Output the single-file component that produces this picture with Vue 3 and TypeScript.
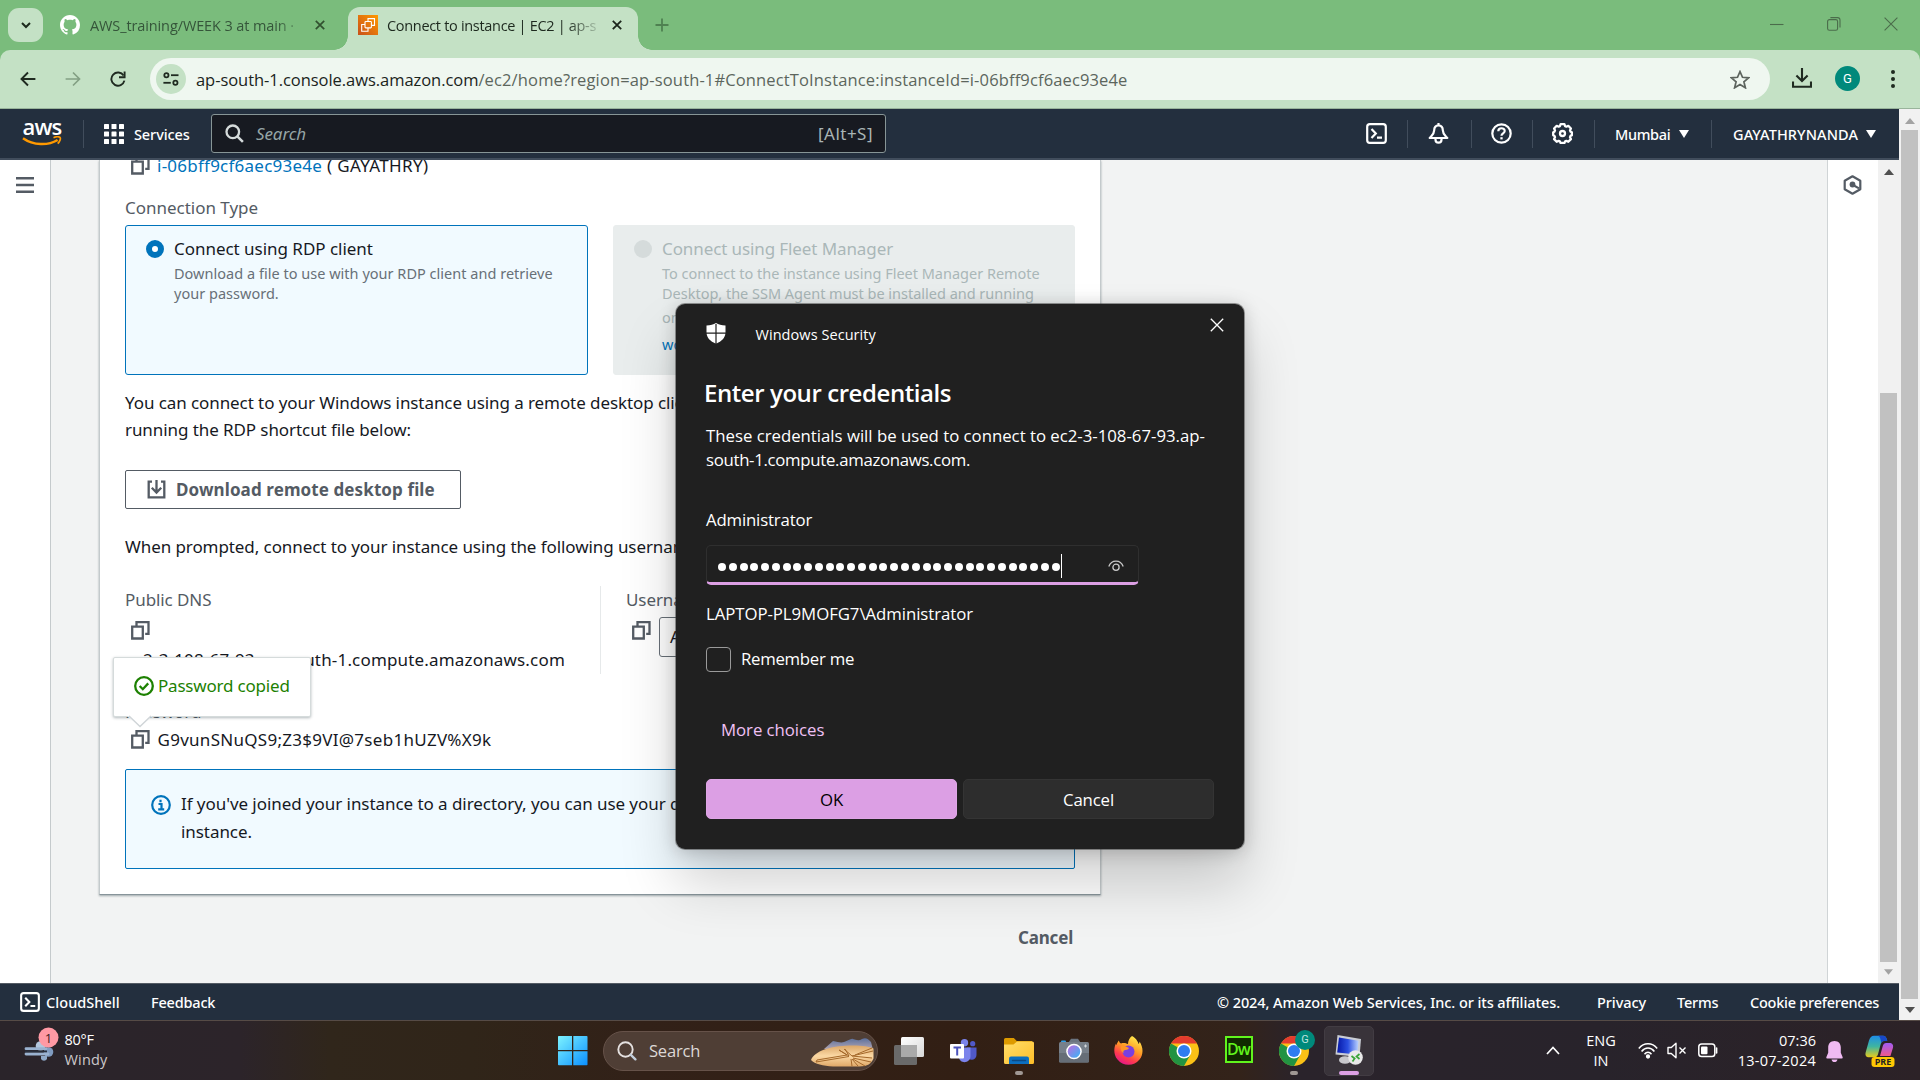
<script setup lang="ts">
import { ref } from 'vue'

const passwordLength = 32
const serverDomain = 'ec2-3-108-67-93.ap-south-1.compute.amazonaws.com'
const rememberMe = ref(false)
const password = 'G9vunSNuQS9;Z3$9VI@7seb1hUZV%X9k'
</script>

<template>
  <div class="screen">
    <!-- Browser tab strip -->
    <div class="tabstrip">
      <div class="tab-search">
        <svg width="12" height="12" viewBox="0 0 12 12"><path d="M2 4l4 4 4-4" fill="none" stroke="#1c2a1d" stroke-width="2" /></svg>
      </div>
      <div class="tab idle">
        <svg class="fav" width="20" height="20" viewBox="0 0 16 16"><path fill="#fff" d="M8 0C3.58 0 0 3.58 0 8c0 3.54 2.29 6.53 5.47 7.59.4.07.55-.17.55-.38 0-.19-.01-.82-.01-1.49-2.01.37-2.53-.49-2.69-.94-.09-.23-.48-.94-.82-1.13-.28-.15-.68-.52-.01-.53.63-.01 1.08.58 1.23.82.72 1.21 1.87.87 2.33.66.07-.52.28-.87.51-1.07-1.78-.2-3.64-.89-3.64-3.95 0-.87.31-1.59.82-2.15-.08-.2-.36-1.02.08-2.12 0 0 .67-.21 2.2.82.64-.18 1.32-.27 2-.27s1.36.09 2 .27c1.53-1.04 2.2-.82 2.2-.82.44 1.1.16 1.92.08 2.12.51.56.82 1.27.82 2.15 0 3.07-1.87 3.75-3.65 3.95.29.25.54.73.54 1.48 0 1.07-.01 1.93-.01 2.2 0 .21.15.46.55.38A8.01 8.01 0 0 0 16 8c0-4.42-3.58-8-8-8z" /></svg>
        <span class="tab-title">AWS_training/WEEK 3 at main ·</span>
        <svg class="tab-x" width="10" height="10" viewBox="0 0 10 10"><path d="M.8.8l8.4 8.4M9.2.8L.8 9.2" stroke="#31502f" stroke-width="1.7" /></svg>
      </div>
      <div class="tab active">
        <svg class="fav" width="20" height="20" viewBox="0 0 20 20">
          <defs><linearGradient id="ec2" x1="0" y1="1" x2="1" y2="0"><stop offset="0" stop-color="#c8511b" /><stop offset="1" stop-color="#f90" /></linearGradient></defs>
          <rect width="20" height="20" fill="url(#ec2)" />
          <g fill="none" stroke="#fff" stroke-width="1.1"><rect x="7" y="6.5" width="6.4" height="6.4" rx=".8" /><path d="M10 6.5V3.6h6.5v6.8h-3M7 9.5H3.7v6.8H10v-3.4" /></g>
        </svg>
        <span class="tab-title">Connect to instance | EC2 | ap-s</span>
        <svg class="tab-x" width="10" height="10" viewBox="0 0 10 10"><path d="M.8.8l8.4 8.4M9.2.8L.8 9.2" stroke="#1b251b" stroke-width="1.8" /></svg>
      </div>
      <svg class="plus" width="14" height="14" viewBox="0 0 14 14"><path d="M7 .5v13M.5 7h13" stroke="#4f8151" stroke-width="1.8" /></svg>
      <div class="win-ctl">
        <svg width="14" height="16" viewBox="0 0 14 16"><path d="M0 8.5h13.5" stroke="#4b6c4b" stroke-width="1.1" /></svg>
        <svg width="14" height="16" viewBox="0 0 14 16"><rect x=".6" y="3.6" width="10" height="10.6" rx="1.8" fill="none" stroke="#4b6c4b" stroke-width="1.1" /><path d="M3.4 1.6h7.2a2.4 2.4 0 0 1 2.4 2.4v7.6" fill="none" stroke="#4b6c4b" stroke-width="1.1" /></svg>
        <svg width="14" height="16" viewBox="0 0 14 16"><path d="M.6 1.6l12.8 12.8M13.4 1.6L.6 14.4" stroke="#4b6c4b" stroke-width="1.1" /></svg>
      </div>
    </div>

    <!-- Browser toolbar -->
    <div class="toolbar-wrap">
      <div class="toolbar">
        <svg class="nav-back" width="16" height="16" viewBox="0 0 16 16"><path d="M15.4 8H1.600M8 1.500L1.500 8 8 14.500" fill="none" stroke="#1f2a20" stroke-width="1.900" /></svg>
        <svg class="nav-fwd" width="16" height="16" viewBox="0 0 16 16"><path d="M.6 8h13.800M8 1.500L14.500 8 8 14.500" fill="none" stroke="#83a084" stroke-width="1.700" /></svg>
        <svg class="nav-reload" width="16" height="16" viewBox="0 0 16 16"><path d="M13.600 4.600A6.600 6.600 0 1 0 14.400 9.600" fill="none" stroke="#1f2a20" stroke-width="1.900" /><path d="M14.600.6v5.600H9" fill="none" stroke="#1f2a20" stroke-width="1.900" /></svg>
        <div class="omnibox">
          <div class="site-info">
            <svg width="16" height="14" viewBox="0 0 16 14" fill="none" stroke="#1f2a20" stroke-width="1.800"><circle cx="3.400" cy="3.200" r="2.100" /><path d="M8 3.200h7.500" /><circle cx="12.400" cy="10.800" r="2.100" /><path d="M.4 10.800h7.400" /></svg>
          </div>
          <span class="url"><b>ap-south-1.console.aws.amazon.com</b>/ec2/home?region=ap-south-1#ConnectToInstance:instanceId=i-06bff9cf6aec93e4e</span>
          <svg class="star" width="20" height="19" viewBox="0 0 20 19"><path d="M10 1.600l2.500 5.700 6.100.5-4.700 4 1.500 6L10 14.500l-5.400 3.300 1.500-6-4.700-4 6.100-.5z" fill="none" stroke="#5d645e" stroke-width="1.700" /></svg>
        </div>
        <svg class="dl" width="20" height="20" viewBox="0 0 20 20"><path d="M10 0v12.400M4.400 7.400L10 13l5.600-5.600M1 13.500v5.300h18v-5.300" fill="none" stroke="#1f2a20" stroke-width="2.100" /></svg>
        <div class="avatar">G</div>
        <svg class="kebab" width="4" height="18" viewBox="0 0 4 18"><g fill="#1f2a20"><circle cx="2" cy="2" r="2" /><circle cx="2" cy="9" r="2" /><circle cx="2" cy="16" r="2" /></g></svg>
      </div>
    </div>

    <!-- Web page -->
    <div class="page">
      <div class="console">
        <header class="aws-head">
          <div class="aws-logo">
            <span>aws</span>
            <svg width="40" height="12" viewBox="0 0 40 12"><path d="M1 2.200c10.500 7.400 25 7.600 34.600 1.800" fill="none" stroke="#f90" stroke-width="2.500" /><path d="M31.500 1.700c2.500-1 5.600-1 6.600-.2.800.9-.2 4-2.400 6.200" fill="none" stroke="#f90" stroke-width="1.700" /></svg>
          </div>
          <i class="sep"></i>
          <svg class="grid" width="20" height="20" viewBox="0 0 20 20" fill="#fff"><template v-for="r in 3" :key="r"><rect v-for="c in 3" :key="c" :x="(c - 1) * 7.500" :y="(r - 1) * 7.500" width="5" height="5" rx=".6" /></template></svg>
          <span class="services">Services</span>
          <div class="aws-search">
            <svg width="19" height="19" viewBox="0 0 19 19"><circle cx="7.800" cy="7.800" r="6.300" fill="none" stroke="#d5dbdb" stroke-width="2.300" /><path d="M12.300 12.300l5.600 5.600" stroke="#d5dbdb" stroke-width="2.500" /></svg>
            <em>Search</em>
            <span>[Alt+S]</span>
          </div>
          <div class="head-right">
            <div class="hr-cell w1"><svg width="21" height="21" viewBox="0 0 21 21" fill="none" stroke="#fff" stroke-width="2.200"><rect x="1.200" y="1.200" width="18.600" height="18.600" rx="2.600" /><path d="M5.500 6l4.300 4.500L5.500 15M11 14.700h5" /></svg></div>
            <div class="hr-cell w2"><svg width="21" height="21" viewBox="0 0 21 21" fill="none" stroke="#fff" stroke-width="2.200"><path d="M10.500 2.500c-3.300 0-4.300 2.400-4.300 4.700 0 3.800-2.400 5.400-4.500 7.800h17.600c-2.100-2.400-4.500-4-4.500-7.800 0-2.300-1-4.700-4.300-4.700z" stroke-linejoin="round" /><path d="M7.500 15.500v1.200a3 3 0 0 0 6 0v-1.200M10.500 0v2" /></svg></div>
            <div class="hr-cell w3"><svg width="21" height="21" viewBox="0 0 21 21" fill="none" stroke="#fff" stroke-width="2.200"><circle cx="10.500" cy="10.500" r="9.200" /><path d="M7.300 8.300c0-4 6.400-4 6.400-.3 0 2.200-3.200 2.400-3.200 4.700" /><path d="M10.500 14.200v2.200" stroke-width="2.300" /></svg></div>
            <div class="hr-cell w4"><svg width="21" height="21" viewBox="0 0 21 21" fill="none" stroke="#fff" stroke-width="2.300"><path d="M8.600 1.200h3.800l.7 2 1.300.5 1.900-.9 2.600 2.700-.9 1.900.5 1.300 1.400.6v2.900l-1.400.7-.5 1.300.9 1.900-2.600 2.700-1.900-.9-1.300.5-.7 1.500H8.600l-.7-1.500-1.300-.5-1.900.9-2.600-2.700.9-1.900-.5-1.300-1.300-.7V9.300l1.300-.6.500-1.300-.9-1.900 2.600-2.700 1.900.9 1.300-.5z" stroke-linejoin="round" /><circle cx="10.500" cy="10.500" r="2.500" /></svg></div>
            <div class="hr-cell w5"><span class="mumbai">Mumbai</span><i class="caret"></i></div>
            <div class="hr-cell w6"><span class="account">GAYATHRYNANDA</span><i class="caret"></i></div>
          </div>
        </header>

        <div class="body">
          <aside class="left"><svg width="18" height="16" viewBox="0 0 18 16"><path d="M0 1.300h18M0 8h18M0 14.700h18" stroke="#545b64" stroke-width="2.400" /></svg></aside>

          <main class="main">
            <section class="card">
              <div class="row first">
                <svg class="copy" width="19" height="19" viewBox="0 0 19 19"><path d="M5.500 4.500V1.200h12v11.600h-3.300M1.200 5.700h10.600v11.800H1.200z" fill="none" stroke="#545b64" stroke-width="2.300" /></svg>
                <span class="link id">i-06bff9cf6aec93e4e</span><span class="name">( GAYATHRY)</span>
              </div>
              <div class="label conn">Connection Type</div>
              <div class="tiles">
                <div class="tile on">
                  <i class="radio"></i>
                  <div>
                    <h4>Connect using RDP client</h4>
                    <p>Download a file to use with your RDP client and retrieve<br>your password.</p>
                  </div>
                </div>
                <div class="tile off">
                  <i class="radio"></i>
                  <div>
                    <h4>Connect using Fleet Manager</h4>
                    <p>To connect to the instance using Fleet Manager Remote<br>Desktop, the SSM Agent must be installed and running</p>
                    <p class="gap">on the instance.</p>
                    <p class="gap2 link">working with SSM Agent</p>
                  </div>
                </div>
              </div>
              <p class="para p1">You can connect to your Windows instance using a remote desktop client of your choice, and<br>running the RDP shortcut file below:</p>
              <button class="dl-btn">
                <svg width="19" height="19" viewBox="0 0 19 19" fill="none" stroke="#545b64" stroke-width="2.300"><path d="M5 1.700H1.700v15.600h15.600V1.700H14M9.500 0v12M4.800 7.800l4.700 4.700 4.700-4.700" /></svg>
                <span>Download remote desktop file</span>
              </button>
              <p class="para p2">When prompted, connect to your instance using the following username and password:</p>
              <div class="cols">
                <div class="col c1">
                  <div class="label">Public DNS</div>
                  <div class="row cp"><svg class="copy" width="19" height="19" viewBox="0 0 19 19"><path d="M5.500 4.500V1.200h12v11.600h-3.300M1.200 5.700h10.600v11.800H1.200z" fill="none" stroke="#545b64" stroke-width="2.300" /></svg></div>
                  <div class="dns">{{ serverDomain }}</div>
                </div>
                <div class="col c2">
                  <div class="label">Username</div>
                  <div class="row cp"><svg class="copy" width="19" height="19" viewBox="0 0 19 19"><path d="M5.500 4.500V1.200h12v11.600h-3.300M1.200 5.700h10.600v11.800H1.200z" fill="none" stroke="#545b64" stroke-width="2.300" /></svg><div class="user-field">Administrator</div></div>
                </div>
              </div>
              <div class="pw-block">
                <div class="label">Password</div>
                <div class="row">
                  <svg class="copy" width="19" height="19" viewBox="0 0 19 19"><path d="M5.500 4.500V1.200h12v11.600h-3.300M1.200 5.700h10.600v11.800H1.200z" fill="none" stroke="#545b64" stroke-width="2.300" /></svg>
                  <span class="pw">{{ password }}</span>
                </div>
                <div class="toast">
                  <svg width="20" height="20" viewBox="0 0 20 20" fill="none" stroke="#1d8102" stroke-width="2.300"><circle cx="10" cy="10" r="8.800" /><path d="M5.700 10l3.100 3.200 5.400-5.800" /></svg>
                  <span>Password copied</span>
                  <svg class="toast-arrow" width="24" height="13" viewBox="0 0 24 13"><path d="M0 0h24v1L12 12.500 0 1z" fill="#fff" /><path d="M1 1l11 10.500L23 1" fill="none" stroke="#d0d5d8" stroke-width="1.500" /></svg>
                </div>
              </div>
              <div class="alert">
                <svg width="20" height="20" viewBox="0 0 20 20" fill="none" stroke="#0073bb" stroke-width="2.200"><circle cx="10" cy="10" r="8.800" /><path d="M7.500 9h3v5.200M7.200 14.300h6M9.500 4.800v2.500" /></svg>
                <p>If you've joined your instance to a directory, you can use your directory credentials to connect to your<br>instance.</p>
              </div>
            </section>
            <div class="page-cancel">Cancel</div>
          </main>

          <aside class="right"><svg width="19" height="20" viewBox="0 0 19 20"><path d="M9.500 1.300l7.800 4.400v8.600l-7.800 4.400-7.800-4.400V5.700z" fill="none" stroke="#545b64" stroke-width="2.200" stroke-linejoin="round" /><circle cx="9.500" cy="9.500" r="2.900" fill="#545b64" /><path d="M10 10l6 3.400" stroke="#545b64" stroke-width="2.200" /></svg></aside>
          <div class="sb inner">
            <svg width="10" height="6" viewBox="0 0 10 6"><path d="M0 6l5-6 5 6z" fill="#505050" /></svg>
            <i></i>
            <svg width="9" height="6" viewBox="0 0 10 6"><path d="M0 0h10L5 6z" fill="#a3a3a3" /></svg>
          </div>
        </div>

        <footer class="foot">
          <svg width="20" height="20" viewBox="0 0 21 21" fill="none" stroke="#fff" stroke-width="2.200"><rect x="1.200" y="1.200" width="18.600" height="18.600" rx="2.600" /><path d="M5.500 6l4.300 4.500L5.500 15M11 14.700h5" /></svg>
          <span class="f-shell">CloudShell</span>
          <span class="f-feed">Feedback</span>
          <span class="f-copy">© 2024, Amazon Web Services, Inc. or its affiliates.</span>
          <span class="f-priv">Privacy</span>
          <span class="f-terms">Terms</span>
          <span class="f-cookie">Cookie preferences</span>
        </footer>
      </div>
      <div class="sb outer">
        <svg width="10" height="6" viewBox="0 0 10 6"><path d="M0 6l5-6 5 6z" fill="#a3a3a3" /></svg>
        <i></i>
        <svg width="10" height="6" viewBox="0 0 10 6"><path d="M0 0h10L5 6z" fill="#505050" /></svg>
      </div>
    </div>

    <!-- Windows taskbar -->
    <div class="taskbar">
      <div class="weather">
        <svg width="36" height="42" viewBox="0 0 36 42">
          <circle cx="16.500" cy="20" r="4.800" fill="#b3c6dd" /><circle cx="24.500" cy="26" r="4.800" fill="#7f9bc0" />
          <path d="M17 30h6v3a3.500 3.500 0 0 1-6 0z" fill="#8fa9c8" />
          <path d="M2 22.700h20M2 28h22" stroke="#9ab2d0" stroke-width="2.800" stroke-linecap="round" />
          <path d="M1 25.400h22" stroke="#29303e" stroke-width="1.800" />
          <circle cx="24.500" cy="11.500" r="10" fill="#ff99a4" />
          <text x="24.500" y="16.500" text-anchor="middle" class="w-num">1</text>
        </svg>
        <div class="w-txt"><div class="w-deg">80°F</div><div class="w-cond">Windy</div></div>
      </div>
      <svg class="start" width="30" height="30" viewBox="0 0 30 30">
        <defs><linearGradient id="win" x1="0" y1="0" x2="1" y2="1"><stop offset="0" stop-color="#7df3ff" /><stop offset="1" stop-color="#0b8fff" /></linearGradient></defs>
        <path d="M0 .8Q0 0 .8 0H14v14H0zM15.300 0h13.400q.8 0 .8.800V14H15.300zM0 15.300h14v14H.8q-.8 0-.8-.8zM15.300 15.300h14.200v13.200q0 .8-.8.8H15.300z" fill="url(#win)" />
      </svg>
      <div class="tb-search">
        <svg width="20" height="20" viewBox="0 0 20 20"><circle cx="8.500" cy="8.500" r="7.200" fill="none" stroke="#e5e1e0" stroke-width="1.900" /><path d="M13.600 13.600l4.800 4.800" stroke="#c3cfdc" stroke-width="2.300" stroke-linecap="round" /></svg>
        <span>Search</span>
        <svg class="sand" width="63" height="29" viewBox="0 0 63 29">
          <defs><linearGradient id="snd" x1="0" y1="0" x2="0" y2="1"><stop offset="0" stop-color="#dba667" /><stop offset=".5" stop-color="#fbd8a4" /><stop offset="1" stop-color="#dfa868" /></linearGradient><linearGradient id="mnt" x1="0" y1="0" x2="0" y2="1"><stop offset="0" stop-color="#5a6f9c" /><stop offset="1" stop-color="#b7a9b4" /></linearGradient></defs>
          <path d="M13 11c3-3 6-5 9-8 5 1 8 2 11 1 4-1 7-4 9-3 3 1 6 2 9 0 4-2 6 0 9 3l2 8z" fill="url(#mnt)" />
          <path d="M0 22C4 13 19 8 38 7.500c11-.3 20 .5 24.500 3v10c-2 5-6 8-14 8H22C12 28 4 26 0 22z" fill="url(#snd)" />
          <path d="M5 24l33-5.500M6 22l30-5-8-5M28 12l10 6-4-7M33 11l8 7M41 18l20 2M41 18l21-5M42 20l18 4M42 21l12 7M41 21l6 7M40 21l1 7M44 17l17-7M5 24l1-2" fill="none" stroke="#a4682a" stroke-width="1" />
        </svg>
      </div>
      <div class="apps">
        <div class="app"><svg width="30" height="28" viewBox="0 0 30 28"><defs><linearGradient id="tv" x1="0" y1="0" x2="1" y2="1"><stop offset="0" stop-color="#fff" /><stop offset="1" stop-color="#d8d8d8" /></linearGradient></defs><rect x="7" y="0" width="23" height="20" rx="1.500" fill="url(#tv)" /><rect x="0" y="8" width="23" height="20" rx="1.500" fill="#6a6a6a" /><path d="M7 8h16v12H7z" fill="#aaa" /></svg></div>
        <div class="app"><svg width="27" height="24" viewBox="0 0 27 24"><circle cx="14.500" cy="3.700" r="3.700" fill="#7b83eb" /><circle cx="22.700" cy="4.700" r="2.600" fill="#5059c9" /><path d="M17 8.500h9.500v7a4.500 4.500 0 0 1-9.500 1z" fill="#5059c9" /><path d="M9 8.500h11.500V17c0 8-11.500 8-11.500 1z" fill="#7b83eb" /><rect x="0" y="5" width="14" height="14.500" rx="1" fill="#fff" /><path d="M3.500 8.500h7.500M7.200 8.500v8" stroke="#4b53bc" stroke-width="2" /></svg></div>
        <div class="app"><svg width="30" height="28" viewBox="0 0 30 28"><defs><linearGradient id="fld" x1="0" y1="0" x2="1" y2="1"><stop offset="0" stop-color="#ffde6b" /><stop offset="1" stop-color="#ffbe28" /></linearGradient></defs><path d="M0 2.500Q0 1 1.500 1h8.300l3 3H28v6H0z" fill="#dd9a00" /><path d="M0 7.500h9.500L13 4.500h15.500q1.500 0 1.500 1.500v19.500q0 1.500-1.500 1.500h-27Q0 27 0 25.500z" fill="url(#fld)" /><path d="M5 27v-5.500q0-2 2-2h16q2 0 2 2V27z" fill="#0c6fc0" /><path d="M8.500 23.500h13" stroke="#0b4a85" stroke-width="1.400" stroke-linecap="round" /></svg><i class="dot"></i></div>
        <div class="app"><svg width="30" height="26" viewBox="0 0 30 26"><defs><linearGradient id="cam" x1="0" y1="0" x2="1" y2="1"><stop offset="0" stop-color="#c06be0" /><stop offset="1" stop-color="#35b5f5" /></linearGradient></defs><path d="M9.500 4.500L12 .8h7l2.500 3.700z" fill="#6b7580" /><rect x="2" y="2.500" width="5" height="4" rx="1" fill="#2ea0e8" /><rect x="0" y="4" width="30" height="20.500" rx="1.500" fill="#77808a" /><path d="M0 15h30v8q0 1.500-1.500 1.500h-27Q0 24.500 0 23z" fill="#666e77" /><circle cx="15" cy="13.500" r="7.800" fill="#fff" /><circle cx="15" cy="13.500" r="6.300" fill="url(#cam)" /><path d="M26.500 6.500v3M25 8h3" stroke="#d5d9dd" stroke-width="1" /></svg></div>
        <div class="app"><svg width="29" height="30" viewBox="0 0 29 30"><defs><linearGradient id="ff" x1=".8" y1="0" x2=".3" y2="1"><stop offset="0" stop-color="#fff14f" /><stop offset=".45" stop-color="#ff9a26" /><stop offset=".75" stop-color="#ff3a4f" /><stop offset="1" stop-color="#e3158d" /></linearGradient></defs><path d="M18 0c5 3 6 6 6.500 8 1-1 1-2 1-2.500 4 6 4 13 0 18a14 14 0 0 1-22 0C-1 18 0 11 2 7.500c0 1 .5 1.500.5 1.500C3 7 4 5.500 5 4.500 5 6 6 7 7 7.500c3-1 5 0 7 .5C14 5 15.500 1.500 18 0z" fill="url(#ff)" /><circle cx="14.500" cy="15.500" r="6" fill="#7a3fe0" /><path d="M7 10c3-1 5 .5 8 2-1 2-3.500 1.800-5 2.500-1.500 1 0 3 0 3C7 16 6 13 7 10z" fill="#ff9626" /></svg></div>
        <div class="app"><svg width="30" height="30" viewBox="0 0 30 30"><circle cx="15" cy="15" r="15" fill="#fbc116" /><path d="M2 7.500A15 15 0 0 0 15 30l6.500-11.500L15 15z" fill="#229342" /><path d="M2 7.500A15 15 0 0 1 28 7.500H15z" fill="#e33b2e" /><circle cx="15" cy="15" r="7.500" fill="#fff" /><circle cx="15" cy="15" r="6" fill="#2f7cf0" /></svg></div>
        <div class="app"><div class="dw">Dw</div></div>
        <div class="app"><svg width="30" height="30" viewBox="0 0 30 30"><circle cx="15" cy="15" r="15" fill="#fbc116" /><path d="M2 7.500A15 15 0 0 0 15 30l6.500-11.500L15 15z" fill="#229342" /><path d="M2 7.500A15 15 0 0 1 28 7.500H15z" fill="#e33b2e" /><circle cx="15" cy="15" r="7.500" fill="#fff" /><circle cx="15" cy="15" r="6" fill="#2f7cf0" /></svg><b class="g-badge">G</b><i class="dot"></i></div>
        <div class="app current"><svg width="30" height="30" viewBox="0 0 30 30"><defs><linearGradient id="mon" x1="0" y1="0" x2="1" y2="0"><stop offset="0" stop-color="#0618a8" /><stop offset=".5" stop-color="#2b4fe0" /><stop offset="1" stop-color="#bcd3ff" /></linearGradient></defs><ellipse cx="11" cy="25" rx="6" ry="3.800" fill="#c8c8cc" /><path d="M3.500 0l23.500 4-1.500 18L1.500 19.500z" fill="#c9ccd4" /><path d="M5 2.500l19.500 3.200-1.200 13.800L3.200 17.500z" fill="url(#mon)" /><circle cx="21.500" cy="22.500" r="7.300" fill="#e9e9e9" /><path d="M17.500 21l3.200 2.500-2.200 3M25.500 19l-3 2.500 3 2.500" fill="none" stroke="#3aa537" stroke-width="1.700" /></svg><i class="pill"></i></div>
      </div>
      <div class="tray">
        <svg class="chev" width="14" height="9" viewBox="0 0 14 9"><path d="M1 8l6-6.500L13 8" fill="none" stroke="#fff" stroke-width="1.700" /></svg>
        <div class="lang">ENG<br>IN</div>
        <svg class="wifi" width="20" height="17" viewBox="0 0 20 17" fill="none" stroke="#fff" stroke-width="1.500"><path d="M.8 6.500c5-6.300 13.400-6.300 18.400 0M3.600 9.500c3.600-4.600 9.200-4.600 12.800 0M6.500 12.300c2-2.600 5-2.600 7 0" /><circle cx="10" cy="14.500" r="1.400" fill="#fff" /></svg>
        <svg class="vol" width="20" height="17" viewBox="0 0 20 17" fill="none" stroke="#fff" stroke-width="1.400"><path d="M1 5.500h3.300L9 1.300v14.400l-4.700-4.200H1z" stroke-linejoin="round" /><path d="M12.500 5.500l6 6M18.500 5.500l-6 6" /></svg>
        <svg class="bat" width="20" height="15" viewBox="0 0 20 15"><rect x=".8" y="1" width="16" height="12.600" rx="2.800" fill="none" stroke="#fff" stroke-width="1.500" /><rect x="3" y="3.500" width="6.500" height="7.800" rx="1" fill="#fff" /><path d="M18.600 5v5" stroke="#fff" stroke-width="1.600" stroke-linecap="round" /></svg>
        <div class="clock"><div class="time">07:36</div><div class="date">13-07-2024</div></div>
        <svg class="bell" width="17" height="22" viewBox="0 0 17 22"><path d="M8.500 0c-4 0-6.300 2.800-6.300 6.500v5.200L.3 16.200q-.3 1.300 1 1.300h14.400q1.300 0 1-1.300l-1.900-4.500V6.500C14.800 2.800 12.500 0 8.500 0zM5.500 18.500c.5 3.400 5.500 3.400 6 0z" fill="#efbaf2" /></svg>
        <svg class="copilot" width="30" height="32" viewBox="0 0 30 32">
          <defs><linearGradient id="cp1" x1="0" y1="0" x2="0" y2="1"><stop offset="0" stop-color="#1e8ee8" /><stop offset=".5" stop-color="#3fb5a0" /><stop offset="1" stop-color="#e7cb1c" /></linearGradient><linearGradient id="cp2" x1="0" y1="0" x2="0" y2="1"><stop offset="0" stop-color="#a05cf5" /><stop offset="1" stop-color="#f0588a" /></linearGradient></defs>
          <path d="M9 .8h9c2.500 0 3.500 1.800 4.300 5.200h-3c-2.500 0-3.300 2-4 4.500l-2.300 8.700c-.6 2-1.500 3-3.600 3H4c-3.200 0-4-2.200-3.300-5L4 5.500C5 2.500 6.500.8 9 .8z" fill="url(#cp1)" /><path d="M13 .8h5c2.500 0 3.500 1.800 4.300 5.200h-3c-1.500 0-2.500.6-3 1.800C15.600 4 15 1.500 13 .8z" fill="#1848c8" />
          <path d="M17.500 12c.7-2.600 1.600-4 3.800-4h3c3 0 4.500 2 3.600 5l-2.500 8H15z" fill="url(#cp2)" />
          <rect x="6.500" y="22" width="23" height="10" rx="3" fill="#fec803" /><text x="18" y="30.300" text-anchor="middle" class="pre">PRE</text>
        </svg>
      </div>
    </div>

    <!-- Windows Security dialog floating above the page -->
    <div class="dialog">
      <div class="d-head">
        <svg width="20" height="21" viewBox="0 0 20 21"><path d="M10 0c2.500 1.700 5.500 2.300 9.500 2.400v7.100H10.600V1h-1.200v8.500H.5V2.400C4.500 2.300 7.500 1.700 10 0zM.6 10.700h8.800v9.700C4.500 18.300 1.200 15 .6 10.700zM10.600 10.700h8.800c-.6 4.300-3.900 7.600-8.800 9.700z" fill="#fff" /></svg>
        <span>Windows Security</span>
        <svg class="d-x" width="14" height="14" viewBox="0 0 14 14"><path d="M.8.8l12.400 12.400M13.200.8L.8 13.200" stroke="#fff" stroke-width="1.300" /></svg>
      </div>
      <h2>Enter your credentials</h2>
      <p class="d-text"><span class="ln1">These credentials will be used to connect to ec2-3-108-67-93.ap-</span><br><span class="ln2">south-1.compute.amazonaws.com.</span></p>
      <div class="d-user">Administrator</div>
      <div class="d-input">
        <span class="dots"><i v-for="n in passwordLength" :key="n"></i></span><b class="cursor"></b>
        <svg width="16" height="12" viewBox="0 0 16 12" fill="none" stroke="#c9c9c9" stroke-width="1.300"><path d="M.8 6.500C3.500-.8 12.500-.8 15.200 6.500" /><circle cx="8" cy="7.300" r="3.100" /></svg>
      </div>
      <div class="d-acct">LAPTOP-PL9MOFG7\Administrator</div>
      <div class="d-remember" @click="rememberMe = !rememberMe"><i></i><span>Remember me</span></div>
      <div class="d-more">More choices</div>
      <div class="d-btns"><button class="ok">OK</button><button class="cancel">Cancel</button></div>
    </div>
  </div>
</template>

<style>
html, body { margin: 0; background: #232f3e; }
</style>
<style scoped>
* { box-sizing: border-box; }
svg { display: block; flex: none; }
p, h2, h4 { margin: 0; font-weight: 400; }
button { margin: 0; padding: 0; border: 0; font: inherit; }
.screen { position: relative; width: 1920px; height: 1080px; overflow: hidden; display: flex; flex-direction: column; font-family: "Open Sans", "Noto Sans", sans-serif; white-space: nowrap; }

.tabstrip { height: 50px; background: #7abc7c; display: flex; align-items: flex-start; padding-left: 8px; flex: none; }
.tab-search { width: 35px; height: 34px; margin-top: 8px; border-radius: 11px; background: #c4e1c5; display: flex; align-items: center; justify-content: center; flex: none; }
.tab { height: 43px; margin-top: 7px; display: flex; align-items: center; padding-bottom: 7px; flex: none; }
.tab .fav { margin-right: 10px; }
.tab-title { font-size: 14.5px; line-height: 22px; padding-top: 1px; }
.idle { width: 305px; padding-left: 17px; }
.idle .tab-title { width: 225px; letter-spacing: -.11px; color: #35553a; -webkit-mask: linear-gradient(90deg, #000 185px, rgba(0,0,0,.4) 206px); mask: linear-gradient(90deg, #000 185px, rgba(0,0,0,.4) 206px); }
.active { position: relative; width: 290px; padding-left: 10px; border-radius: 12px 12px 0 0; background: #c4e1c5; }
.active .fav { margin-right: 9px; }
.active::before, .active::after { content: ""; position: absolute; bottom: 0; width: 14px; height: 14px; }
.active::before { left: -14px; background: radial-gradient(circle at 0 0, transparent 13.5px, #c4e1c5 14px); }
.active::after { right: -14px; background: radial-gradient(circle at 100% 0, transparent 13.5px, #c4e1c5 14px); }
.active .tab-title { width: 225px; letter-spacing: -.31px; color: #1d291e; -webkit-mask: linear-gradient(90deg, #000 180px, rgba(0,0,0,.2) 209px); mask: linear-gradient(90deg, #000 180px, rgba(0,0,0,.2) 209px); }
.plus { margin: 18px 0 0 17px; }
.win-ctl { margin: 16px 22px 0 auto; display: flex; gap: 43px; }

.toolbar-wrap { height: 59px; background: #7abc7c; flex: none; }
.toolbar { height: 59px; background: #c4e1c5; border-bottom: 1px solid #99b49b; border-radius: 10px 10px 0 0; display: flex; align-items: center; padding-left: 20px; }
.nav-fwd { margin-left: 29px; }
.nav-reload { margin-left: 29px; }
.omnibox { width: 1620px; height: 42px; margin-left: 24px; border-radius: 21px; background: #eff7f0; display: flex; align-items: center; padding-left: 6px; }
.site-info { width: 30px; height: 30px; border-radius: 50%; background: #c4e1c5; display: flex; align-items: center; justify-content: center; }
.url { margin-left: 10px; padding-top: 1px; font-size: 16.5px; line-height: 24px; letter-spacing: .083px; color: #5c665d; }
.url b { font-weight: 400; letter-spacing: -.05px; color: #1b241c; }
.url { letter-spacing: .14px; }
.star { margin: 0 20px 0 auto; }
.dl { margin-left: 22px; margin-bottom: 2px; }
.avatar { width: 25px; height: 25px; margin-left: 23px; margin-bottom: 1px; border-radius: 50%; background: #00897b; color: #fff; font: 13px/25px Roboto, sans-serif; text-align: center; }
.kebab { margin-left: 31px; }

.page { height: 911px; flex: none; display: flex; }
.console { width: 1899px; display: flex; flex-direction: column; font-family: "Noto Sans", "Open Sans", sans-serif; }
.aws-head { height: 51px; flex: none; background: #232f3e; border-bottom: 2px solid #414d5c; display: flex; align-items: center; color: #fff; padding-left: 22px; font-size: 14.5px; font-weight: 500; }
.aws-logo { width: 40px; height: 28px; display: flex; flex-direction: column; align-items: center; }
.aws-logo span { font: 600 22px/17px "Open Sans", sans-serif; height: 16px; margin-top: -2px; letter-spacing: -.8px; }
.aws-logo svg { margin-top: 2px; }
.sep { width: 1px; height: 28px; margin-left: 21px; background: #414d5c; }
.grid { margin-left: 20px; }
.services { width: 56px; margin-left: 10px; letter-spacing: -.1px; }
.aws-search { width: 675px; height: 39px; margin-left: 21px; border: 1px solid #879596; border-radius: 3px; background: #171a21; display: flex; align-items: center; padding: 0 12px 0 13px; color: #95a5a6; font-size: 17px; font-weight: 400; }
.aws-search em { margin-left: 12px; letter-spacing: -.1px; }
.aws-search span { margin-left: auto; letter-spacing: .48px; color: #a9b4b5; }
.head-right { margin-left: auto; height: 28px; display: flex; align-items: stretch; }
.hr-cell { display: flex; align-items: center; }
.hr-cell + .hr-cell { border-left: 1px solid #414d5c; }
.w1 { width: 41px; } .w2 { width: 64px; padding-left: 20px; } .w3 { width: 61px; padding-left: 19px; } .w4 { width: 62px; padding-left: 19px; } .w5 { width: 117px; padding-left: 20px; } .w6 { width: 188px; padding-left: 21px; }
.mumbai { width: 56px; letter-spacing: -.35px; } .account { width: 125px; letter-spacing: .1px; }
.caret { width: 0; height: 0; margin-left: 8px; border: 5px solid transparent; border-top: 8px solid #fff; border-bottom: 0; }

.body { height: 823px; flex: none; display: flex; background: #f2f3f3; }
.left { width: 51px; flex: none; background: #fff; border-right: 1px solid #c5cacc; padding: 17px 0 0 16px; }
.main { width: 1776px; flex: none; overflow: hidden; padding-left: 48px; }
.right { width: 51px; flex: none; background: #fff; border-left: 1px solid #d0d4d6; padding: 15px 0 0 15px; }
.sb { background: #f1f1f1; display: flex; flex-direction: column; align-items: center; }
.sb i { width: 17px; background: #c1c1c1; }
.inner { width: 21px; height: 823px; }
.inner svg:first-child { margin-top: 9px; }
.inner i { height: 569px; margin-top: 218px; }
.inner svg:last-child { margin-top: 7px; }
.outer { width: 21px; height: 911px; }
.outer svg:first-child { margin-top: 9px; }
.outer i { height: 869px; margin-top: 6px; }
.outer svg:last-child { margin-top: 8px; }

.card { width: 1002px; height: 735px; padding: 0 25px; background: #fff; border: 1px solid #c4cacc; border-top: 0; border-bottom: 1px solid #87949a; box-shadow: 0 1px 2px rgba(0,28,36,.35); font-size: 17px; line-height: 27px; color: #16191f; letter-spacing: -.08px; display: flow-root; }
.row { display: flex; align-items: center; height: 27px; }
.copy { margin-left: 5.500px; }
.label { color: #545b64; }
.first { margin-top: -8px; }
.link { color: #0073bb; }
.id { margin-left: 7.500px; letter-spacing: .24px; }
.name { margin-left: 5px; letter-spacing: .36px; }
.conn { margin-top: 15px; letter-spacing: -.02px; }
.tiles { display: flex; justify-content: space-between; margin-top: 4px; width: 950px; }
.tile { width: 463px; height: 150px; border: 1px solid #0073bb; border-radius: 3px; background: #f1faff; display: flex; padding: 9px 0 0 20px; }
.tile h4 { font-size: 17px; line-height: 27px; letter-spacing: -.03px; }
.tile p { font-size: 14.5px; line-height: 20px; color: #687078; letter-spacing: .02px; }
.tile h4 + p { margin-top: 1px; }
.tile.off { width: 462px; background: #e9eded; border-color: #e9eded; }
.tile.off h4 { color: #aab7b8; letter-spacing: -.1px; } .tile.off p { color: #aab7b8; letter-spacing: -.01px; }
.tile.off p.link { color: #0073bb; }
.tile .gap { margin-top: 4px; } .tile .gap2 { margin-top: 7px; letter-spacing: 1px; }
.radio { width: 18px; height: 18px; margin: 5px 10px 0 0; border-radius: 50%; border: 6px solid #0073bb; background: #fff; flex: none; }
.off .radio { border: 0; background: #d5dbdb; }
.p1 { margin-top: 14px; }
.dl-btn { width: 336px; height: 39px; margin-top: 27px; border: 1px solid #545b64; border-radius: 2px; background: #fff; display: flex; align-items: center; padding: 0 0 1px 21px; color: #545b64; font-size: 17px; font-weight: 700; letter-spacing: .1px; }
.dl-btn span { margin-left: 10px; }
.p2 { margin-top: 24px; }
.cols { display: flex; height: 88px; margin-top: 26px; overflow: hidden; }
.c1 { width: 476px; border-right: 1px solid #e6e9ea; } .c2 { padding-left: 25px; }
.cp { margin-top: 4px; }
.dns { margin-top: 2px; letter-spacing: .17px; }
.user-field { width: 380px; height: 40px; margin: 13px 0 0 8.500px; border: 1px solid #687078; border-radius: 3px; padding-left: 10px; line-height: 37px; flex: none; }
.pw-block { position: relative; margin-top: 24px; }
.pw-block .row { margin-top: 1px; }
.pw { margin-left: 8px; letter-spacing: .28px; }
.toast { position: absolute; left: -12px; top: -41px; width: 198px; height: 60px; background: #fff; border: 1px solid #d5dbdb; border-radius: 2px; box-shadow: 0 1px 3px rgba(0,28,36,.3); display: flex; align-items: center; padding: 0 0 2px 20px; color: #1d8102; }
.toast span { margin: -2px 0 0 4px; letter-spacing: -.2px; }
.toast-arrow { position: absolute; left: 14px; top: 57px; }
.alert { width: 950px; height: 100px; margin-top: 16px; border: 1px solid #0073bb; border-radius: 2px; background: #f1faff; display: flex; padding: 20px 0 0 25px; overflow: hidden; }
.alert svg { margin: 5px 10px 0 0; }
.alert p { line-height: 28px; letter-spacing: -.06px; }
.page-cancel { width: 974px; margin-top: 29px; text-align: right; font-size: 17px; line-height: 27px; font-weight: 700; color: #545b64; letter-spacing: -.2px; }

.foot { height: 37px; flex: none; background: #232f3e; border-top: 1px solid #545b64; color: #fff; display: flex; align-items: center; padding: 0 20px 0 20px; font-size: 14.5px; font-weight: 500; }
.f-shell { width: 74px; margin-left: 6px; letter-spacing: .05px; }
.f-feed { width: 64px; margin-left: 31px; letter-spacing: -.2px; }
.f-copy { width: 343px; margin-left: auto; letter-spacing: -.08px; }
.f-priv { width: 49px; margin-left: 37px; letter-spacing: -.08px; }
.f-terms { width: 41px; margin-left: 31px; letter-spacing: -.2px; }
.f-cookie { width: 129px; margin-left: 32px; letter-spacing: -.24px; }

.taskbar { height: 60px; flex: none; display: flex; align-items: center; border-top: 1px solid #564b46; background: linear-gradient(90deg, #2a242a 0, #2c242a 240px, #30261b 330px, #302519 470px, #322118 640px, #321f14 960px, #33231a 1240px, #2a232b 1300px, #28232b 1600px, #2c2227 1920px); color: #fff; font-size: 14.5px; line-height: 20px; }
.weather { width: 534px; height: 59px; display: flex; padding: 5px 0 0 24px; }
.w-num { font: 13px "Open Sans", sans-serif; fill: #3b1d22; }
.w-txt { margin: 4px 0 0 4.500px; }
.w-deg { letter-spacing: -.3px; } .w-cond { color: #cdc9cb; letter-spacing: .18px; }
.start { margin-left: 24px; }
.tb-search { width: 275px; height: 40px; margin-left: 15px; border-radius: 20px; border: 1px solid #665249; background: #4f3e35; display: flex; align-items: center; padding: 0 3px 0 13px; }
.tb-search span { margin-left: 12px; font-size: 16.5px; letter-spacing: -.2px; color: #ddd8d6; }
.sand { margin: 4px 0 0 auto; }
.apps { display: flex; margin-left: 3px; }
.app { position: relative; width: 55px; height: 50px; display: flex; align-items: center; justify-content: center; }
.dot { position: absolute; left: 24px; top: 45px; width: 8px; height: 4px; border-radius: 2px; background: #a09894; }
.dw { width: 28px; height: 27px; margin-top: -3px; border: 2px solid #61f51d; background: #102a00; color: #61f51d; font: 600 16px/22px "Open Sans", sans-serif; text-align: center; letter-spacing: -.8px; }
.g-badge { position: absolute; left: 29px; top: 4px; width: 20px; height: 20px; border-radius: 50%; background: #00897b; color: #bfe3df; font: 11px/20px Roboto, sans-serif; text-align: center; }
.current { width: 50px; margin-left: 3px; border-radius: 5px; background: #39333a; border: 1px solid #423c43; padding-bottom: 2px; }
.pill { position: absolute; left: 14px; top: 44px; width: 20px; height: 4px; border-radius: 2px; background: #dc9fe4; }
.tray { display: flex; align-items: center; margin-left: 172px; flex: none; }
.lang { width: 50px; margin-left: 16px; text-align: center; line-height: 19.5px; }
.wifi { margin-left: 12px; } .vol { margin-left: 9px; } .bat { margin-left: 11px; }
.clock { width: 98px; text-align: right; }
.date { letter-spacing: .26px; }
.bell { margin-left: 10px; margin-top: 2px; }
.copilot { margin-left: 22px; }
.pre { font: 700 9px "Open Sans", sans-serif; fill: #222; }

.dialog { position: absolute; left: 676px; top: 304px; width: 568px; height: 545px; border-radius: 9px; background: #202020; color: #fff; font-size: 16.8px; box-shadow: 0 0 0 1px rgba(60,60,60,.5), 0 2px 18px rgba(0,0,0,.2), 0 34px 56px rgba(0,0,0,.18); padding-left: 30px; line-height: 24px; }
.d-head { height: 58px; display: flex; align-items: center; font-size: 14.5px; }
.d-head svg:first-child { margin: 1px 0 0 -.5px; }
.d-head span { margin-left: 30px; margin-top: 3px; letter-spacing: .06px; }
.d-head .d-x { margin: -17px 20px 0 auto; }
h2 { margin: 14px 0 0 -2px; font-size: 24px; line-height: 34px; font-weight: 600; letter-spacing: -.43px; }
.d-text { margin-top: 14px; line-height: 24px; }
.ln1 { letter-spacing: -.015px; }
.ln2 { letter-spacing: -.31px; }
.d-user { margin-top: 36px; letter-spacing: -.17px; }
.d-input { width: 433px; height: 40px; margin-top: 13px; border: 1px solid #2f2f2f; border-bottom: 3px solid #dc9fe4; border-radius: 5px; display: flex; align-items: center; padding: 6px 13px 0 11px; }
.dots { display: flex; gap: 2.770px; }
.dots i { width: 8px; height: 8px; border-radius: 50%; background: #fff; }
.cursor { width: 1px; height: 24px; margin: -3px 0 0 1px; background: #fff; }
.d-input svg { margin: -3px 1px 0 auto; }
.d-acct { margin-top: 17px; letter-spacing: -.06px; }
.d-remember { display: flex; align-items: center; margin-top: 20px; height: 26px; }
.d-remember i { width: 25px; height: 25px; border: 1px solid #9a9a9a; border-radius: 4px; }
.d-remember span { margin: -1px 0 0 10px; letter-spacing: -.28px; }
.d-more { margin: 46px 0 0 15px; color: #f0c1f5; letter-spacing: -.05px; }
.d-btns { display: flex; gap: 6px; margin-top: 37px; }
.d-btns button { width: 251px; height: 40px; border-radius: 5px; color: #fff; line-height: 38px; padding-top: 1px; background: #2d2d2d; border: 1px solid #343434; letter-spacing: -.15px; }
.d-btns .ok { background: #dc9fe4; border-color: #dfa6e6; color: #000; }
</style>
